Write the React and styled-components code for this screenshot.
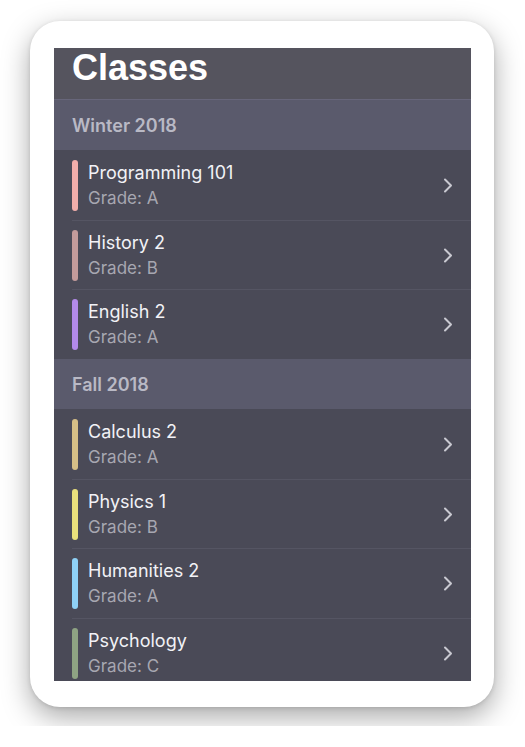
import React from 'react';
import styled, { createGlobalStyle } from 'styled-components';

const GlobalStyle = createGlobalStyle`
  body {
    margin: 0;
    background: #ffffff;
    font-family: Inter, "Liberation Sans", sans-serif;
  }
`;

const sections = [
  {
    title: 'Winter 2018',
    classes: [
      { name: 'Programming 101', grade: 'A', color: '#f2aeab' },
      { name: 'History 2', grade: 'B', color: '#c39b9b' },
      { name: 'English 2', grade: 'A', color: '#b38ae9' },
    ],
  },
  {
    title: 'Fall 2018',
    classes: [
      { name: 'Calculus 2', grade: 'A', color: '#d6bf87' },
      { name: 'Physics 1', grade: 'B', color: '#e9e07c' },
      { name: 'Humanities 2', grade: 'A', color: '#8fd1f6' },
      { name: 'Psychology', grade: 'C', color: '#8ea383' },
    ],
  },
];

const Chevron = () => (
  <svg width="10" height="15" viewBox="0 0 10 15">
    <polyline
      points="2,1.5 8,7.5 2,13.5"
      fill="none"
      stroke="#c9c9d1"
      strokeWidth="2"
      strokeLinecap="round"
      strokeLinejoin="round"
    />
  </svg>
);

const App = () => {
  return (
    <Page>
      <GlobalStyle />
      <Card>
        <Screen>
          <Header>
            <HeaderTitle>Classes</HeaderTitle>
          </Header>
          {sections.map((section) => (
            <React.Fragment key={section.title}>
              <SectionHeader>{section.title}</SectionHeader>
              {section.classes.map((item, index) => (
                <Row key={item.name} first={index === 0}>
                  <ColorBar color={item.color} />
                  <RowText>
                    <ClassName>{item.name}</ClassName>
                    <Grade>Grade: {item.grade}</Grade>
                  </RowText>
                  <Chevron />
                </Row>
              ))}
            </React.Fragment>
          ))}
        </Screen>
      </Card>
    </Page>
  );
};

export default App;

const Page = styled.div`
  padding: 21px 0 0 30px;
  height: 726px;
  box-sizing: border-box;
`;

const Card = styled.div`
  width: 464px;
  height: 686px;
  box-sizing: border-box;
  padding: 27px 23px 26px 24px;
  background: #ffffff;
  border-radius: 30px;
  box-shadow: 0 10px 28px rgba(0, 0, 0, 0.34), 0 1px 4px rgba(0, 0, 0, 0.12);
`;

const Screen = styled.div`
  height: 633px;
  overflow: hidden;
  background: #4a4a57;
`;

const Header = styled.div`
  height: 38px;
  background: #55545e;
  border-bottom: 1px solid #67667a;
  display: flex;
  align-items: flex-end;
  padding: 0 18px 13px;
`;

const HeaderTitle = styled.h1`
  margin: 0;
  font-family: "Liberation Sans", Arial, sans-serif;
  font-weight: 700;
  font-size: 36px;
  line-height: 36px;
  color: #ffffff;
`;

const SectionHeader = styled.div`
  height: 50px;
  background: #5a5a6c;
  display: flex;
  align-items: center;
  padding: 0 18px;
  font-size: 18px;
  font-weight: 600;
  color: #b9b9c5;
`;

const Row = styled.div`
  height: 68.7px;
  display: flex;
  align-items: center;
  margin-left: 18px;
  padding-right: 18px;
  border-top: 1px solid ${(p) => (p.first ? 'transparent' : '#555563')};
`;

const ColorBar = styled.div`
  width: 6px;
  height: 51px;
  border-radius: 3px;
  background: ${(p) => p.color};
  flex-shrink: 0;
`;

const RowText = styled.div`
  flex: 1;
  display: flex;
  flex-direction: column;
  gap: 4px;
  padding-left: 10px;
`;

const ClassName = styled.div`
  font-size: 18px;
  line-height: 22px;
  color: #f2f2f6;
`;

const Grade = styled.div`
  font-size: 17px;
  line-height: 21px;
  color: #a7a7b1;
`;
